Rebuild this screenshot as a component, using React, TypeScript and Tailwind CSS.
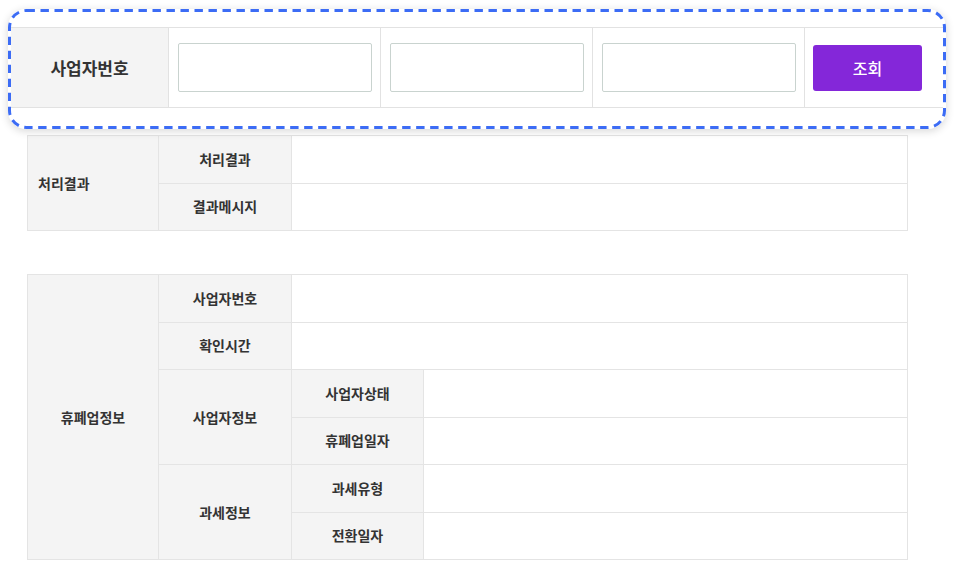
import React from 'react';

const font = { fontFamily: '"Noto Sans CJK KR", "Noto Sans", sans-serif' };

const th = 'bg-[#f4f4f4] border border-[#e4e4e4] text-[14px] font-semibold text-[#333] text-center align-middle h-[47.5px] p-0';
const td = 'bg-white border border-[#e4e4e4] h-[47.5px] p-0';

function SearchCard() {
    return (
        <div className="relative ml-[8px] h-[120px] w-[938px] rounded-[18px] bg-white p-[3px] shadow-[0_2px_8px_rgba(0,0,0,0.16)]">
            {/* dashed highlight outline */}
            <svg className="pointer-events-none absolute inset-0" width="938" height="120">
                <rect x="1.5" y="1.5" width="935" height="117" rx="17" fill="none" stroke="#3c6cf5" strokeWidth="3" strokeDasharray="8.4 5.6" />
            </svg>
            <div className="mt-[15px] flex h-[81px] border-y border-[#e2e2e2]">
                <div className="flex w-[158px] shrink-0 items-center justify-center border-r border-[#e2e2e2] bg-[#f4f4f4] text-[17px] font-bold text-[#333]">
                    사업자번호
                </div>
                {[0, 1, 2].map((i) => (
                    <div key={i} className="flex w-[212px] shrink-0 items-center border-r border-[#e2e2e2] pl-[9px] pr-[8px]">
                        <input className="h-[49px] w-full rounded-[2px] border border-[#c9d3cf] bg-white outline-none" />
                    </div>
                ))}
                <div className="flex flex-1 items-center pl-[8px]">
                    <button className="h-[46px] w-[109px] rounded-[3px] bg-[#8427d9] text-[16px] font-medium text-white">
                        조회
                    </button>
                </div>
            </div>
        </div>
    );
}

export default function App() {
    return (
        <div className="min-h-screen bg-white pt-[9px]" style={font}>
            <SearchCard />

            {/* 처리결과 */}
            <table className="ml-[27px] mt-[6px] w-[881px] border-collapse table-fixed">
                <colgroup>
                    <col className="w-[131px]" />
                    <col className="w-[133px]" />
                    <col />
                </colgroup>
                <tbody>
                    <tr>
                        <th rowSpan={2} className={th + ' !text-left !pl-[10px]'}>처리결과</th>
                        <th className={th}>처리결과</th>
                        <td className={td}></td>
                    </tr>
                    <tr>
                        <th className={th}>결과메시지</th>
                        <td className={td}></td>
                    </tr>
                </tbody>
            </table>

            {/* 휴폐업정보 */}
            <table className="ml-[27px] mt-[43px] w-[881px] border-collapse table-fixed">
                <colgroup>
                    <col className="w-[131px]" />
                    <col className="w-[133px]" />
                    <col className="w-[132px]" />
                    <col />
                </colgroup>
                <tbody>
                    <tr>
                        <th rowSpan={6} className={th}>휴폐업정보</th>
                        <th className={th}>사업자번호</th>
                        <td colSpan={2} className={td}></td>
                    </tr>
                    <tr>
                        <th className={th}>확인시간</th>
                        <td colSpan={2} className={td}></td>
                    </tr>
                    <tr>
                        <th rowSpan={2} className={th}>사업자정보</th>
                        <th className={th}>사업자상태</th>
                        <td className={td}></td>
                    </tr>
                    <tr>
                        <th className={th}>휴폐업일자</th>
                        <td className={td}></td>
                    </tr>
                    <tr>
                        <th rowSpan={2} className={th}>과세정보</th>
                        <th className={th}>과세유형</th>
                        <td className={td}></td>
                    </tr>
                    <tr>
                        <th className={th}>전환일자</th>
                        <td className={td}></td>
                    </tr>
                </tbody>
            </table>
        </div>
    );
}
